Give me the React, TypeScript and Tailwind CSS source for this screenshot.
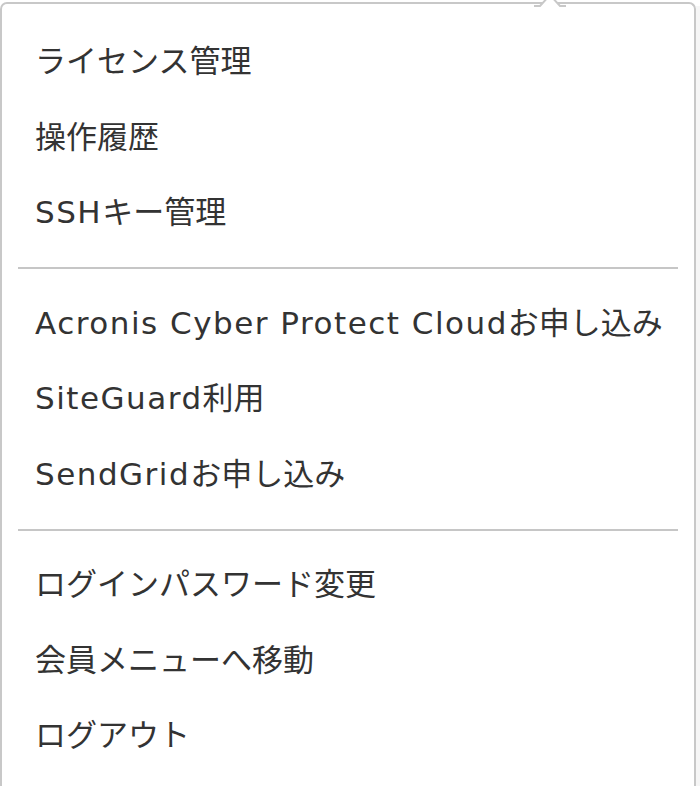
import React from "react";

const groups: string[][] = [
  ["ライセンス管理", "操作履歴", "SSHキー管理"],
  ["Acronis Cyber Protect Cloudお申し込み", "SiteGuard利用", "SendGridお申し込み"],
  ["ログインパスワード変更", "会員メニューへ移動", "ログアウト"],
];

const Label = ({ text }: { text: string }) => (
  <>
    {text.split(/([A-Za-z ]+)/).filter(Boolean).map((part, i) =>
      /^[A-Za-z ]+$/.test(part) ? (
        <span key={i} className="font-['DejaVu_Sans',sans-serif] tracking-[1.5px]">
          {part}
        </span>
      ) : (
        <span key={i}>{part}</span>
      )
    )}
  </>
);

const Caret = () => (
  <svg className="absolute left-[532px] top-[-10px]" width="32" height="14" viewBox="0 0 32 14">
    <path d="M0 12 L6 12 L16 1 L26 12 L32 12" fill="#ffffff" stroke="#c8c8c8" strokeWidth="2" />
    <rect x="0" y="13" width="32" height="2" fill="#ffffff" />
  </svg>
);

export default function App() {
  return (
    <div className="flex h-[786px] w-[700px] overflow-hidden bg-white">
      <div
        className="relative mt-[2px] h-[800px] w-[696px] shrink-0 rounded-t-[7px] border-2 border-b-0 border-[#c8c8c8] bg-white px-[16px] pt-[20px] text-[#333333]"
        style={{ fontFamily: '"Liberation Sans", "Noto Sans CJK JP", sans-serif' }}
      >
        <Caret />
        {groups.map((items, gi) => (
          <div key={gi}>
            {gi > 0 && <div className="my-[16.5px] h-[2px] bg-[#c6c6c6]" />}
            <ul>
              {items.map((label) => (
                <li
                  key={label}
                  className="flex h-[75.5px] items-center pl-[17px] text-[31px] leading-none whitespace-nowrap"
                >
                  <Label text={label} />
                </li>
              ))}
            </ul>
          </div>
        ))}
      </div>
      <div className="mt-[6px] h-[800px] flex-1 bg-[#f6f6f6]" />
    </div>
  );
}
